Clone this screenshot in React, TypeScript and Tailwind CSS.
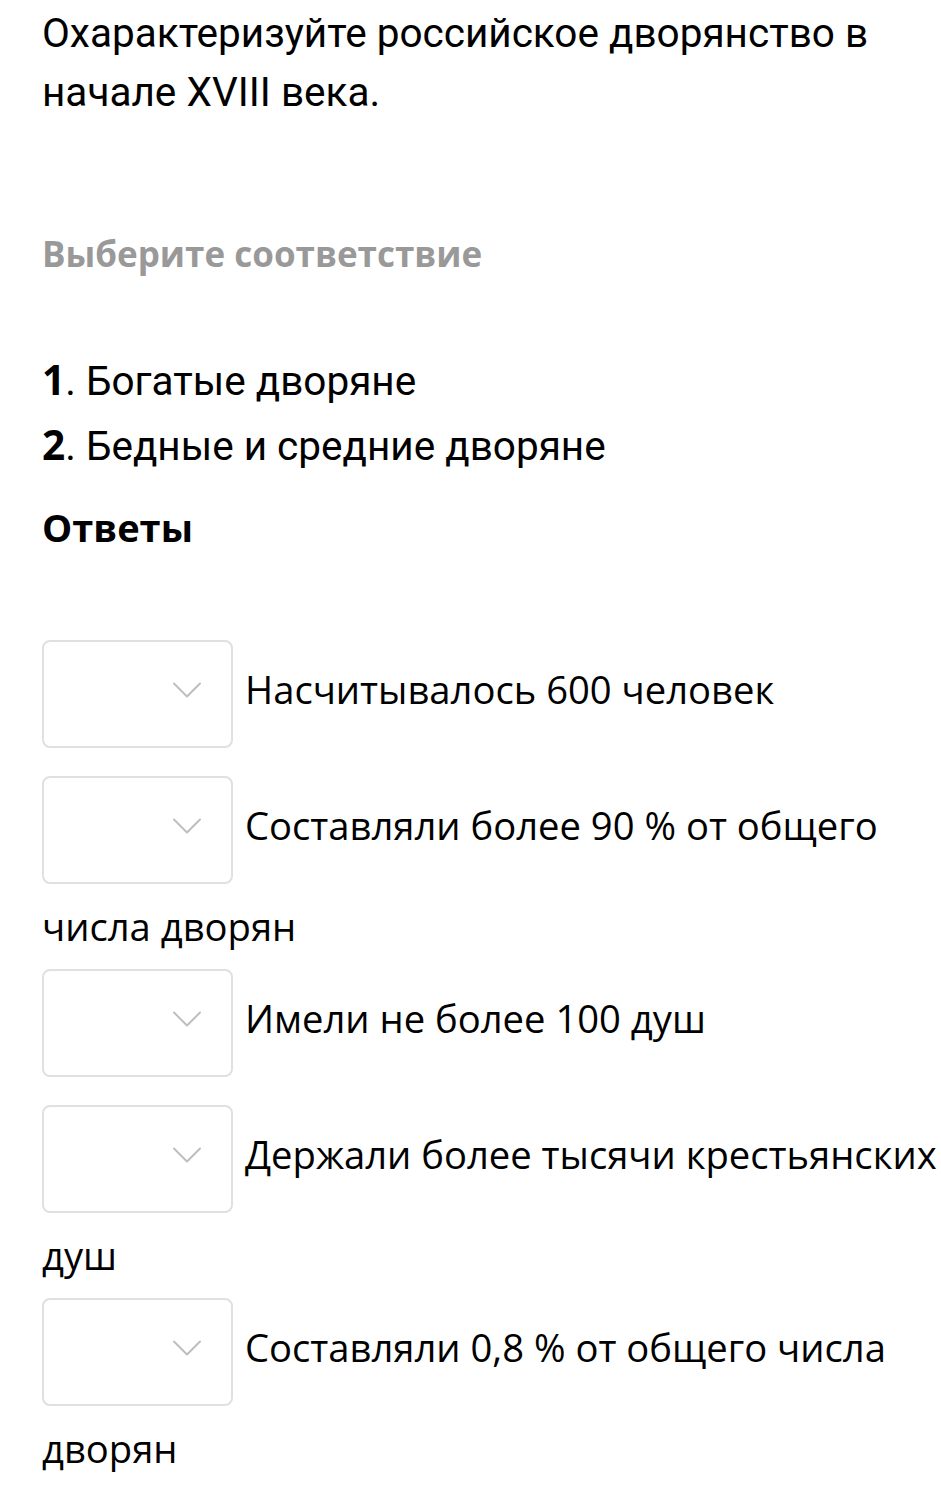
import { ChevronDown } from 'lucide-react';

const answers = [
  'Насчитывалось 600 человек',
  'Составляли более 90 % от общего числа дворян',
  'Имели не более 100 душ',
  'Держали более тысячи крестьянских душ',
  'Составляли 0,8 % от общего числа дворян',
];

function Select() {
  return (
    <span className="my-[14px] mr-3 inline-flex h-[108px] w-[191px] items-center justify-end rounded-lg border-2 border-[#e0e0e0] bg-white pr-[18px] align-middle">
      <ChevronDown className="-mt-2 h-[52px] w-[52px] text-[#bdbdbd]" strokeWidth={0.9} />
    </span>
  );
}

export default function App() {
  return (
    <div className="min-h-[1511px] bg-white pl-[42px] text-black">
      <h1 className="pt-1 font-['Roboto',sans-serif] text-[40.5px] leading-[59px] font-normal">
        Охарактеризуйте российское дворянство в начале XVIII века.
      </h1>

      <p className="mt-[108px] font-['Open_Sans',sans-serif] text-[35px] leading-[48px] font-bold text-[#999]">
        Выберите соответствие
      </p>

      <ol className="mt-[70px] font-['Roboto',sans-serif] text-[40.5px] leading-[63px]">
        <li>
          <span className="font-['Open_Sans',sans-serif] font-bold">1</span>. Богатые дворяне
        </li>
        <li>
          <span className="font-['Open_Sans',sans-serif] font-bold">2</span>. Бедные и средние дворяне
        </li>
      </ol>

      <h2 className="mt-[25px] font-['Open_Sans',sans-serif] text-[38px] leading-[48px] font-bold">Ответы</h2>

      <div className="mt-[75px] font-['Open_Sans',sans-serif] text-[38.2px] leading-[57px]">
        {answers.map((a) => (
          <div key={a}>
            <Select />
            {a}
          </div>
        ))}
      </div>
    </div>
  );
}
